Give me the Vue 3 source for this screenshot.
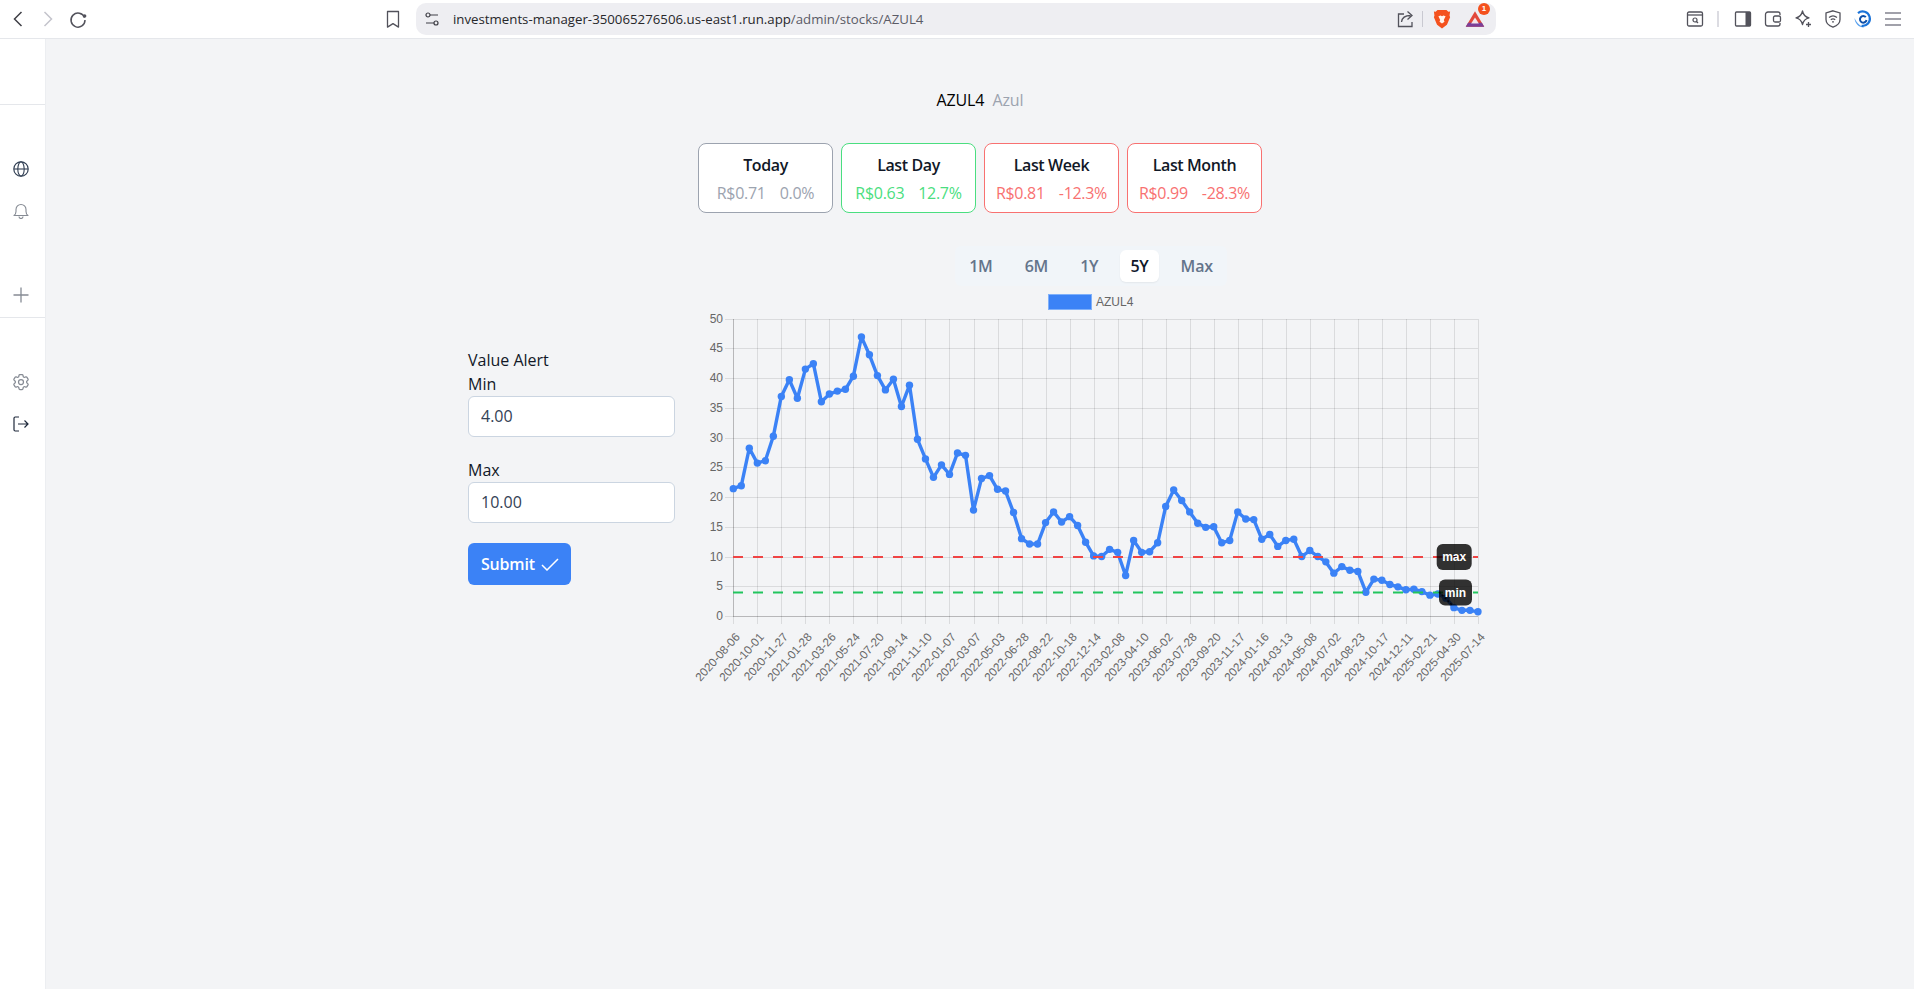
<script setup>
const values = [21.4,21.9,28.2,25.7,26.1,30.2,36.9,39.7,36.6,41.5,42.4,36.0,37.3,37.8,38.1,40.3,46.9,43.9,40.4,38.0,39.8,35.2,38.8,29.7,26.4,23.3,25.4,23.8,27.4,27.0,17.8,23.1,23.6,21.3,21.0,17.4,13.0,12.1,12.1,15.7,17.5,15.8,16.7,15.2,12.4,10.1,10.0,11.2,10.7,6.8,12.7,10.7,10.8,12.3,18.4,21.2,19.4,17.5,15.6,14.9,15.0,12.3,12.7,17.5,16.3,16.2,12.9,13.7,11.7,12.7,12.9,10.0,11.0,10.0,9.1,7.2,8.3,7.7,7.5,4.0,6.2,6.0,5.3,4.9,4.4,4.5,4.1,3.5,3.7,3.0,1.4,0.95,0.95,0.71]
const dates = ['2020-08-06','2020-10-01','2020-11-27','2021-01-28','2021-03-26','2021-05-24','2021-07-20','2021-09-14','2021-11-10','2022-01-07','2022-03-07','2022-05-03','2022-06-28','2022-08-22','2022-10-18','2022-12-14','2023-02-08','2023-04-10','2023-06-02','2023-07-28','2023-09-20','2023-11-17','2024-01-16','2024-03-13','2024-05-08','2024-07-02','2024-08-23','2024-10-17','2024-12-11','2025-02-21','2025-04-30','2025-07-14']
const x0 = 43.3, step = 8.007, top = 28.5, base = 326
const sy = (v) => base - (v / 50) * (base - top)
const points = values.map((v, i) => ({ x: x0 + i * step, y: sy(v) }))
const linePoints = points.map((p) => `${p.x.toFixed(1)},${p.y.toFixed(1)}`).join(' ')
const xTicks = dates.map((d, i) => ({ label: d, x: Math.round(x0 + i * step * 3) + 0.5 }))
const yTicks = [50,45,40,35,30,25,20,15,10,5,0].map((v) => ({ v, y: Math.round(sy(v)) + 0.5 }))
const cards = [
  { title: 'Today', price: 'R$0.71', pct: '0.0%', tone: 'gray' },
  { title: 'Last Day', price: 'R$0.63', pct: '12.7%', tone: 'green' },
  { title: 'Last Week', price: 'R$0.81', pct: '-12.3%', tone: 'red' },
  { title: 'Last Month', price: 'R$0.99', pct: '-28.3%', tone: 'red' },
]
const tabs = ['1M', '6M', '1Y', '5Y', 'Max']
</script>

<template>
  <div class="app">
    <header class="chrome">
      <svg class="nav" viewBox="0 0 20 20"><path d="M13.5 3 6.5 10l7 7" fill="none" stroke="#3f3f46" stroke-width="1.5"/></svg>
      <svg class="nav" viewBox="0 0 20 20"><path d="M6.5 3l7 7-7 7" fill="none" stroke="#c4c4cc" stroke-width="1.5"/></svg>
      <svg class="nav" viewBox="0 0 20 20"><path d="M16.5 8.5A7 7 0 1 0 17 11" fill="none" stroke="#52525b" stroke-width="1.5"/><circle cx="16.6" cy="7" r="1.8" fill="#52525b"/></svg>
      <svg class="bookmark" viewBox="0 0 20 20"><path d="M4.5 2.5h11v15.6L10 14.6l-5.5 3.5z" fill="none" stroke="#52525b" stroke-width="1.3" stroke-linejoin="round"/></svg>
      <div class="bar">
        <svg class="tune" viewBox="0 0 16 16"><path d="M6 4h8M2 12h8" stroke="#3f3f46" stroke-width="1.2" fill="none"/><circle cx="4" cy="4" r="2" fill="none" stroke="#3f3f46" stroke-width="1.2"/><circle cx="12" cy="12" r="2" fill="none" stroke="#3f3f46" stroke-width="1.2"/></svg>
        <span class="url">investments-manager-350065276506.us-east1.run.app<span class="path">/admin/stocks/AZUL4</span></span>
        <svg class="share" viewBox="0 0 20 20"><path d="M9 5H3.5v12.5H17V13" fill="none" stroke="#52525b" stroke-width="1.3"/><path d="M6.5 13c.5-4 3.5-6.5 9-6.5M12.5 2.5l4.5 4-4.5 4" fill="none" stroke="#52525b" stroke-width="1.3"/></svg>
        <i class="bar-sep"></i>
        <svg class="brave" viewBox="0 0 20 22"><path d="M5 1h10l2 2 2-.3-.6 4.3.6 2-3.5 8.5L10 21.5 4.5 17.5 1 9l.6-2L1 2.7 3 3z" fill="#f4511e"/><path d="M6 8l2.5-.8L10 8l1.5-.8L14 8l-2 4 .8 2L10 16l-2.800-2 .8-2z" fill="#fff3ec"/></svg>
        <span class="bat">
          <svg viewBox="0 0 26 24"><path d="M13 2 25 22H1z" fill="#e2483a"/><path d="M1 22h24l-3-5H4z" fill="#7b3f98"/><path d="M13 10l5 8H8z" fill="#f3e6ea"/></svg>
          <b>1</b>
        </span>
      </div>
      <svg class="ext first" viewBox="0 0 20 20"><rect x="2.5" y="3" width="15" height="14" rx="1.5" fill="none" stroke="#52525b" stroke-width="1.3"/><path d="M2.5 6h15" stroke="#52525b" stroke-width="1.3"/><circle cx="10" cy="11" r="2" fill="none" stroke="#52525b" stroke-width="1.2"/><path d="M11.5 12.5 13 14" stroke="#52525b" stroke-width="1.2"/></svg>
      <i class="sep"></i>
      <svg class="ext after-sep" viewBox="0 0 20 20"><rect x="2.5" y="3" width="15" height="14" rx="1" fill="none" stroke="#52525b" stroke-width="1.3"/><rect x="12.5" y="3" width="5" height="14" fill="#52525b"/></svg>
      <svg class="ext" viewBox="0 0 20 20"><path d="M17 6V5a2 2 0 0 0-2-2H5a2.500 2.500 0 0 0-2.500 2.500v9A2.500 2.500 0 0 0 5 17h10a2 2 0 0 0 2-2v-1" fill="none" stroke="#52525b" stroke-width="1.3"/><rect x="10.5" y="7" width="7" height="6" rx="1.5" fill="none" stroke="#52525b" stroke-width="1.3"/></svg>
      <svg class="ext" viewBox="0 0 20 20"><path d="M9.5 2c.8 4 2.7 6 6.5 6.8-3.800.8-5.700 2.900-6.500 6.700C8.700 11.700 6.800 9.600 3 8.800 6.800 8 8.700 6 9.500 2z" fill="none" stroke="#52525b" stroke-width="1.3" stroke-linejoin="round"/><path d="M15.5 13v5M13 15.5h5" stroke="#52525b" stroke-width="1.3"/></svg>
      <svg class="ext" viewBox="0 0 20 20"><path d="M10 1.8 17 4v6.500c0 3.800-3 6.300-7 7.700-4-1.400-7-3.900-7-7.700V4z" fill="none" stroke="#52525b" stroke-width="1.3"/><path d="M6 8.500c2.400-2 5.600-2 8 0M7.800 10.700c1.300-1 3.100-1 4.400 0" fill="none" stroke="#52525b" stroke-width="1.2"/><circle cx="10" cy="12.8" r=".9" fill="#52525b"/></svg>
      <svg class="ext" viewBox="0 0 20 20"><path d="M1.500 9c.3 5.500 4.500 9.800 10 9.500-3.500-1-7.500-3.700-10-9.500z" fill="#5aa2ee"/><path d="M5 4.200A7.200 7.200 0 1 1 8.500 16.800" fill="none" stroke="#1a73d9" stroke-width="2.200"/><path d="M12.800 8.200A3.300 3.300 0 1 0 13.500 11" fill="none" stroke="#0d4fa8" stroke-width="2"/></svg>
      <svg class="ext" viewBox="0 0 20 20"><path d="M2 4h16M2 10h16M2 16h16" stroke="#a1a1aa" stroke-width="1.8"/></svg>
    </header>

    <div class="page">
      <aside class="sidebar">
        <div class="side-head"></div>
        <svg class="side-icon globe" viewBox="0 0 16 16"><circle cx="8" cy="8" r="7.2" fill="none" stroke="#334155" stroke-width="1.2"/><ellipse cx="8" cy="8" rx="3.2" ry="7.2" fill="none" stroke="#334155" stroke-width="1.1"/><path d="M1 8h14" stroke="#334155" stroke-width="1.1"/></svg>
        <svg class="side-icon bell" viewBox="0 0 16 16"><path d="M1 12.5c1.400-1 2-2 2-4V6.500a5 5 0 0 1 10 0v2c0 2 .6 3 2 4z" fill="none" stroke="#868b94" stroke-width="1.1" stroke-linejoin="round"/><path d="M6 13.5a2 2 0 0 0 4 0" fill="none" stroke="#868b94" stroke-width="1.1"/></svg>
        <svg class="side-icon plus" viewBox="0 0 16 16"><path d="M8 .5v15M.5 8h15" stroke="#868b94" stroke-width="1.3"/></svg>
        <hr class="side-rule" />
        <svg class="gear" viewBox="0 0 24 24"><path d="M9.594 3.94c.09-.542.56-.94 1.11-.94h2.593c.55 0 1.02.398 1.11.94l.213 1.281c.063.374.313.686.645.87.074.04.147.083.22.127.325.196.72.257 1.075.124l1.217-.456a1.125 1.125 0 0 1 1.37.49l1.296 2.247a1.125 1.125 0 0 1-.26 1.431l-1.003.827c-.293.241-.438.613-.43.992a7.723 7.723 0 0 1 0 .255c-.008.378.137.75.43.991l1.004.827c.424.35.534.955.26 1.43l-1.298 2.247a1.125 1.125 0 0 1-1.369.491l-1.217-.456c-.355-.133-.75-.072-1.076.124a6.47 6.47 0 0 1-.22.128c-.331.183-.581.495-.644.869l-.213 1.281c-.09.543-.56.94-1.11.94h-2.594c-.55 0-1.019-.398-1.11-.94l-.213-1.281c-.062-.374-.312-.686-.644-.87a6.52 6.52 0 0 1-.22-.127c-.325-.196-.72-.257-1.076-.124l-1.217.456a1.125 1.125 0 0 1-1.369-.49l-1.297-2.247a1.125 1.125 0 0 1 .26-1.431l1.004-.827c.292-.24.437-.613.43-.991a6.932 6.932 0 0 1 0-.255c.007-.38-.138-.751-.43-.992l-1.004-.827a1.125 1.125 0 0 1-.26-1.43l1.297-2.247a1.125 1.125 0 0 1 1.37-.491l1.216.456c.356.133.751.072 1.076-.124.072-.044.146-.086.22-.128.332-.183.582-.495.644-.869l.214-1.28Z" fill="none" stroke="#868b94" stroke-width="1.5" stroke-linejoin="round"/><circle cx="12" cy="12" r="3" fill="none" stroke="#868b94" stroke-width="1.5"/></svg>
        <svg class="side-icon logout" viewBox="0 0 16 16"><path d="M6 1H2.200C1.500 1 1 1.500 1 2.200v11.600c0 .7.5 1.200 1.200 1.200H6" fill="none" stroke="#1e293b" stroke-width="1.2"/><path d="M5 8h10M11.500 4.500 15 8l-3.500 3.500" fill="none" stroke="#1e293b" stroke-width="1.2"/></svg>
      </aside>

      <main class="main">
        <h1 class="title">AZUL4 <span class="company">Azul</span></h1>

        <section class="cards">
          <article v-for="c in cards" :key="c.title" class="card" :class="c.tone">
            <h2 class="card-title">{{ c.title }}</h2>
            <p class="card-values"><span>{{ c.price }}</span><span>{{ c.pct }}</span></p>
          </article>
        </section>

        <section class="content">
          <form class="alert" @submit.prevent>
            <div class="label">Value Alert</div>
            <label class="label min-label" for="min">Min</label>
            <input id="min" class="field" value="4.00" />
            <label class="label max-label" for="max">Max</label>
            <input id="max" class="field" value="10.00" />
            <button class="submit" type="submit">
              Submit
              <svg viewBox="0 0 18 13"><path d="M1 7l5 5L17 1" fill="none" stroke="#fff" stroke-width="1.5"/></svg>
            </button>
          </form>

          <div class="chart-col">
            <div class="tabs">
              <button v-for="t in tabs" :key="t" class="tab" :class="{ active: t === '5Y' }" type="button">{{ t }}</button>
            </div>
            <svg class="chart" viewBox="0 0 802 400" width="802" height="400">
              <rect x="358.5" y="4.5" width="43" height="15" fill="#3b82f6" stroke="#7fb0fa" />
              <text x="406" y="15.5" class="tick">AZUL4</text>

              <g>
                <line v-for="t in yTicks" :key="t.v" x1="35" :x2="788" :y1="t.y" :y2="t.y" class="grid" />
                <line v-for="t in xTicks" :key="t.label" :x1="t.x" :x2="t.x" y1="29" y2="334" class="grid" />
                <line x1="43.5" x2="43.5" y1="29" y2="326.5" class="axis" />
                <line x1="43" x2="788" y1="326.5" y2="326.5" class="axis" />
              </g>

              <text v-for="t in yTicks" :key="'y' + t.v" x="33" :y="t.y + 3.5" class="tick y-tick">{{ t.v }}</text>
              <text v-for="t in xTicks" :key="'x' + t.label" class="tick x-tick" :transform="`translate(${t.x + 7} 347.5) rotate(-48)`">{{ t.label }}</text>

              <polyline :points="linePoints" class="series" />
              <circle v-for="(p, i) in points" :key="i" :cx="p.x" :cy="p.y" r="3.7" class="dot" />

              <line x1="43" x2="788" y1="267" y2="267" class="limit limit-max" />
              <line x1="43" x2="788" y1="302.5" y2="302.5" class="limit limit-min" />

              <path d="M749 302l14 14" class="leader" />
              <rect x="746.7" y="254" width="35" height="26" rx="6" class="tag" />
              <text x="764.2" y="271" class="tag-text">max</text>
              <rect x="749" y="289.5" width="33" height="26" rx="6" class="tag" />
              <text x="765.5" y="306.5" class="tag-text">min</text>
            </svg>
          </div>
        </section>
      </main>
    </div>
  </div>
</template>

<style>
html, body { margin: 0; background: #f3f4f6; }
</style>

<style scoped>
.app { height: 989px; display: flex; flex-direction: column; overflow: hidden; font-family: "Open Sans", "Noto Sans", sans-serif; color: #111827; }

.chrome { height: 38px; flex: none; display: flex; align-items: center; gap: 10px; padding-left: 8px; background: #fff; border-bottom: 1px solid #e5e7eb; }
.nav { width: 20px; height: 20px; }
.bookmark { width: 20px; height: 20px; margin-left: 285px; }
.bar { width: 1080px; height: 32px; margin-left: 3px; box-sizing: border-box; padding: 0 6px 0 8px; border-radius: 10px; background: #eeeef2; display: flex; align-items: center; }
.tune { width: 16px; height: 16px; }
.url { margin-left: 13px; font-size: 13.25px; color: #27272a; white-space: nowrap; }
.path { color: #5b5b66; }
.share { width: 20px; height: 20px; margin-left: auto; }
.bar-sep { width: 1px; height: 16px; background: #c9c9d1; margin: 0 10px 0 7px; }
.brave { width: 18px; height: 20px; }
.bat { position: relative; width: 20px; height: 20px; margin-left: 14px; margin-right: 5px; }
.bat svg { width: 20px; height: 20px; }
.bat b { position: absolute; right: -5px; top: -6px; width: 12px; height: 12px; border-radius: 50%; background: #f4511e; color: #fff; font: 700 8px/12px "Liberation Sans", sans-serif; text-align: center; }
.ext { width: 20px; height: 20px; flex: none; }
.first { margin-left: 179px; }
.sep { width: 1.5px; height: 16px; background: #dcdce2; margin: 0 2px; flex: none; }
.after-sep { margin-left: 2px; }

.page { flex: 1; display: flex; min-height: 0; background: #f3f4f6; }
.sidebar { width: 46px; box-sizing: border-box; flex: none; padding-right: 4px; background: #fff; border-right: 1px solid #eceef1; display: flex; flex-direction: column; align-items: center; }
.side-head { width: calc(100% + 4px); height: 65px; flex: none; margin-right: -4px; border-bottom: 1px solid #e5e7eb; }
.side-icon { width: 16px; height: 16px; flex: none; }
.globe { margin-top: 56px; }
.bell { margin-top: 26px; }
.plus { margin-top: 68px; }
.side-rule { width: calc(100% + 4px); height: 1px; margin: 14px -4px 54px 0; border: 0; background: #e5e7eb; flex: none; }
.gear { width: 20px; height: 20px; flex: none; }
.logout { margin-top: 24px; }

.main { flex: 1; min-width: 0; display: flex; flex-direction: column; align-items: center; padding-top: 49px; }
.title { margin: 0; font-size: 16px; font-weight: 400; line-height: 24px; color: #000; letter-spacing: -0.1px; }
.company { margin-left: 4px; color: #9ca3af; }

.cards { display: flex; gap: 8.5px; margin-top: 31px; }
.card { width: 134.5px; height: 70px; box-sizing: border-box; border: 1px solid; border-radius: 8px; background: #fff; text-align: center; }
.card-title { margin: 9px 0 0; font-size: 16px; font-weight: 600; line-height: 24px; color: #111827; letter-spacing: -0.4px; }
.card-values { margin: 4px 0 0; display: flex; justify-content: center; gap: 14px; font-size: 16px; line-height: 24px; letter-spacing: -0.3px; }
.gray { border-color: #9ca3af; color: #9ca3af; }
.green { border-color: #4ade80; color: #4ade80; }
.red { border-color: #f87171; color: #f87171; }

.content { width: 1024px; display: flex; gap: 15px; margin-top: 33px; }
.alert { width: 207px; flex: none; padding-top: 102px; font-size: 16px; line-height: 24px; color: #111827; }
.label { display: block; }
.min-label { height: 23.5px; }
.max-label { margin-top: 20.5px; }
.field { display: block; width: 100%; height: 41.5px; box-sizing: border-box; padding: 0 12px; border: 1px solid #cbd5e1; border-radius: 6px; background: #fff; color: #334155; font: inherit; outline: none; }
.submit { display: flex; align-items: center; gap: 6px; height: 42px; width: 103px; box-sizing: border-box; margin-top: 20px; padding: 0 0 0 13px; border: 0; border-radius: 6px; background: #3b82f6; color: #fff; font: 600 16px "Open Sans", sans-serif; letter-spacing: -0.2px; }
.submit svg { width: 18px; height: 13px; }

.chart-col { flex: 1; min-width: 0; display: flex; flex-direction: column; align-items: center; }
.tabs { display: flex; gap: 12px; height: 40px; box-sizing: border-box; padding: 4px; border-radius: 6px; background: #f1f5f9; }
.tab { height: 32px; padding: 0 10px; border: 0; border-radius: 6px; background: transparent; color: #64748b; font: 600 16px "Open Sans", sans-serif; letter-spacing: -0.2px; }
.active { background: #fff; color: #0f172a; box-shadow: 0 1px 2px rgba(0, 0, 0, 0.06); }
.chart { display: block; margin-top: 4px; flex: none; }

.grid { stroke: rgba(0, 0, 0, 0.1); stroke-width: 1; }
.axis { stroke: rgba(0, 0, 0, 0.16); stroke-width: 1; }
.tick { font: 12px "Liberation Sans", sans-serif; fill: #666; }
.y-tick { text-anchor: end; }
.x-tick { text-anchor: end; font-size: 11.7px; }
.series { fill: none; stroke: #3b82f6; stroke-width: 3.4; stroke-linejoin: round; }
.dot { fill: #3b82f6; }
.limit { stroke-width: 2; stroke-dasharray: 10 10; }
.limit-max { stroke: #ef4444; }
.limit-min { stroke: #22c55e; }
.leader { stroke: #0f172a; stroke-width: 1.5; stroke-dasharray: 2 2; fill: none; }
.tag { fill: rgba(0, 0, 0, 0.8); }
.tag-text { font: 700 12px "Liberation Sans", sans-serif; fill: #fff; text-anchor: middle; }
</style>
